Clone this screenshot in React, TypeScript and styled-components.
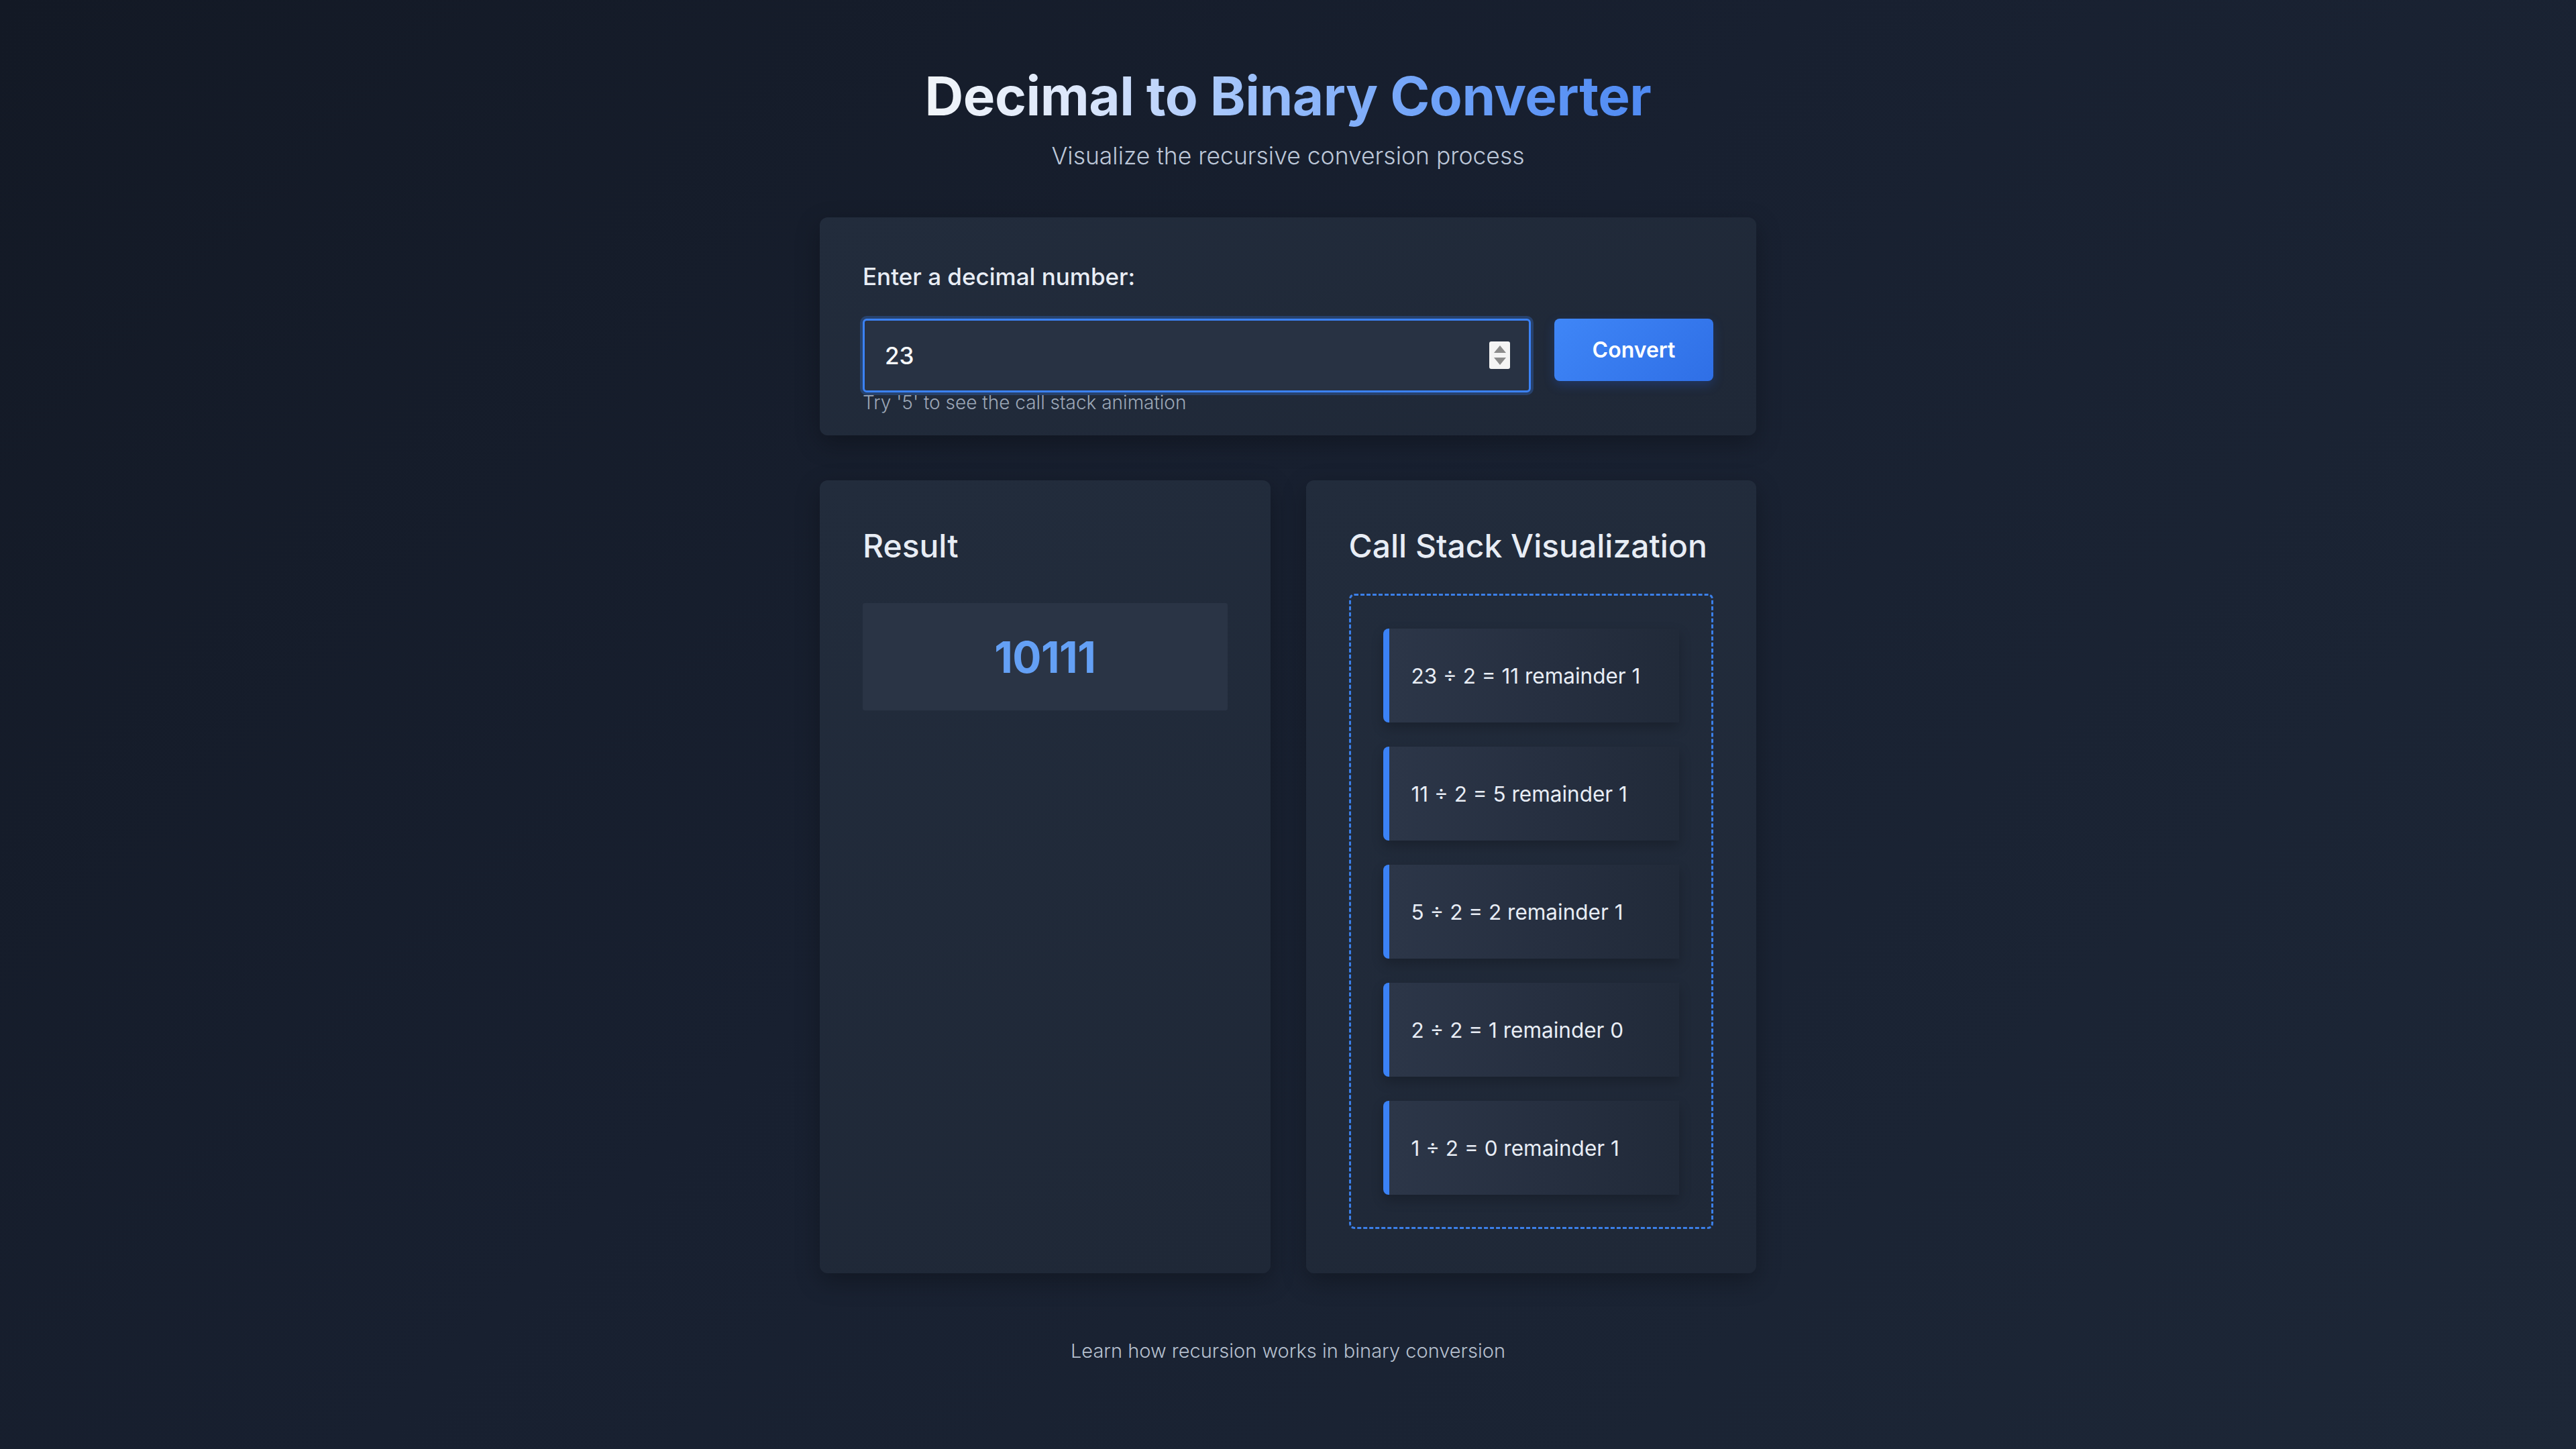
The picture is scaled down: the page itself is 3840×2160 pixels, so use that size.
import React from "react";
import styled, { createGlobalStyle } from "styled-components";

const Global = createGlobalStyle`
  html, body {
    margin: 0;
    padding: 0;
  }
  body {
    min-height: 2160px;
    background: linear-gradient(135deg, #131925 0%, #182030 45%, #1d2737 100%);
    font-family: Inter, "Noto Sans", "Liberation Sans", sans-serif;
    color: #e2e8f0;
  }
  * { box-sizing: border-box; }
`;

const Page = styled.main`
  width: 1396px;
  margin: 0 auto;
  padding-top: 95px;
  padding-bottom: 80px;
  display: flex;
  flex-direction: column;
`;

const Header = styled.header`
  display: flex;
  flex-direction: column;
  align-items: center;
  margin-bottom: 66px;
`;

const Title = styled.h1`
  margin: 0;
  font-size: 80px;
  line-height: 96px;
  font-weight: 700;
  letter-spacing: -0.5px;
  background: linear-gradient(90deg, #f1f5f9 0%, #dbe6fb 22%, #9cc0fb 45%, #6fa2f8 70%, #4f8af3 100%);
  -webkit-background-clip: text;
  background-clip: text;
  color: transparent;
`;

const Subtitle = styled.p`
  margin: 16px 0 0;
  font-size: 35.5px;
  line-height: 51px;
  font-weight: 300;
  color: #bcc7d8;
`;

const Card = styled.section`
  background: linear-gradient(160deg, #222c3c 0%, #1f2837 100%);
  border-radius: 12px;
  padding: 64px;
  box-shadow: 0 12px 36px rgba(0, 0, 0, 0.28);
`;

const Label = styled.label`
  display: block;
  font-size: 35px;
  line-height: 48px;
  font-weight: 500;
  color: #e8edf5;
  margin-bottom: 39px;
`;

const InputRow = styled.div`
  display: flex;
  align-items: flex-start;
  gap: 35px;
`;

const InputWrap = styled.div`
  position: relative;
  flex: 1;
`;

const NumberField = styled.input`
  display: block;
  width: 100%;
  height: 110px;
  padding: 0 30px;
  background: #283243;
  border: 3px solid #3b82f6;
  border-radius: 6px;
  box-shadow: 0 0 0 4px rgba(59, 130, 246, 0.28);
  color: #f8fafc;
  font-family: Inter, "Noto Sans", sans-serif;
  font-size: 35px;
  font-weight: 500;
  outline: none;
`;

const Spinner = styled.span`
  position: absolute;
  right: 31px;
  top: 34px;
  width: 31px;
  height: 41px;
  background: #f4f4f4;
  border-radius: 3px;
  display: flex;
  flex-direction: column;
  align-items: center;
  justify-content: space-between;
  padding: 6px 0;
`;

const Arrow = styled.span<{ $down?: boolean }>`
  width: 0;
  height: 0;
  border-left: 9px solid transparent;
  border-right: 9px solid transparent;
  ${(p) =>
    p.$down
      ? "border-top: 11px solid #8b8b8b;"
      : "border-bottom: 11px solid #8b8b8b;"}
`;

const Hint = styled.div`
  position: absolute;
  left: 0;
  top: 100%;
  font-size: 28px;
  line-height: 31px;
  font-weight: 300;
  color: #9ba6b6;
  white-space: nowrap;
`;

const ConvertButton = styled.button`
  width: 237px;
  height: 93px;
  border: none;
  border-radius: 8px;
  background: linear-gradient(135deg, #3f86f7 0%, #2f6fe6 100%);
  box-shadow: 0 6px 16px rgba(37, 99, 235, 0.25);
  color: #ffffff;
  font-family: Inter, "Noto Sans", sans-serif;
  font-size: 32px;
  font-weight: 600;
  cursor: pointer;
`;

const Panels = styled.div`
  display: grid;
  grid-template-columns: 1fr 1fr;
  gap: 53px;
  margin-top: 67px;
`;

const PanelCard = styled(Card)`
  padding-bottom: 66px;
`;

const PanelTitle = styled.h2`
  margin: 0;
  font-size: 48px;
  line-height: 67px;
  font-weight: 500;
  color: #e8edf5;
`;

const ResultBox = styled.div`
  margin-top: 52px;
  height: 160px;
  background: #2a3445;
  border-radius: 3px;
  display: flex;
  align-items: center;
  justify-content: center;
  font-size: 64px;
  font-weight: 700;
  color: #64a0f5;
  letter-spacing: -0.5px;
`;

const StackArea = styled.div`
  margin-top: 38px;
  border: 3px dashed #3b7fe8;
  border-radius: 8px;
  padding: 49px 48px 48px;
  display: flex;
  flex-direction: column;
  gap: 36px;
`;

const StackItem = styled.div`
  height: 140px;
  display: flex;
  align-items: center;
  padding-left: 33px;
  border-left: 9px solid #3b82f6;
  border-radius: 8px 0 0 8px;
  background: linear-gradient(90deg, #2c3648 0%, #262f40 55%, #212a39 100%);
  box-shadow: 0 8px 18px rgba(0, 0, 0, 0.22);
  font-size: 31.5px;
  font-weight: 400;
  color: #e8edf5;
`;

const Footer = styled.footer`
  margin-top: 96px;
  text-align: center;
  font-size: 29px;
  line-height: 40px;
  font-weight: 300;
  color: #b6c0cf;
`;

const steps = [
  "23 ÷ 2 = 11 remainder 1",
  "11 ÷ 2 = 5 remainder 1",
  "5 ÷ 2 = 2 remainder 1",
  "2 ÷ 2 = 1 remainder 0",
  "1 ÷ 2 = 0 remainder 1",
];

export default function App() {
  return (
    <>
      <Global />
      <Page>
        <Header>
          <Title>Decimal to Binary Converter</Title>
          <Subtitle>Visualize the recursive conversion process</Subtitle>
        </Header>

        <Card>
          <Label htmlFor="dec">Enter a decimal number:</Label>
          <InputRow>
            <InputWrap>
              <NumberField id="dec" type="text" defaultValue="23" />
              <Spinner aria-hidden="true">
                <Arrow />
                <Arrow $down />
              </Spinner>
              <Hint>Try '5' to see the call stack animation</Hint>
            </InputWrap>
            <ConvertButton>Convert</ConvertButton>
          </InputRow>
        </Card>

        <Panels>
          <PanelCard>
            <PanelTitle>Result</PanelTitle>
            <ResultBox>10111</ResultBox>
          </PanelCard>
          <PanelCard>
            <PanelTitle>Call Stack Visualization</PanelTitle>
            <StackArea>
              {steps.map((s) => (
                <StackItem key={s}>{s}</StackItem>
              ))}
            </StackArea>
          </PanelCard>
        </Panels>

        <Footer>Learn how recursion works in binary conversion</Footer>
      </Page>
    </>
  );
}
